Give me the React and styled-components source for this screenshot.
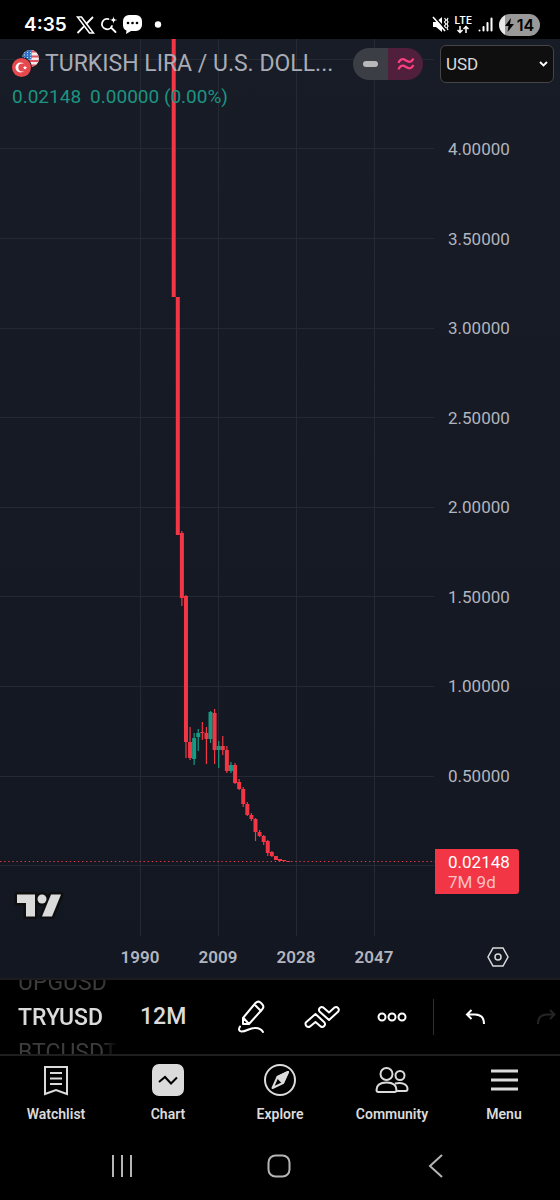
import React from 'react';
import styled, { createGlobalStyle } from 'styled-components';

const GlobalStyle = createGlobalStyle`
    * {
        box-sizing: border-box;
    }
    body {
        margin: 0;
        background: #000;
        font-family: Roboto, "Noto Sans", sans-serif;
    }
    button {
        padding: 0;
        border: none;
        background: none;
        color: inherit;
        font: inherit;
        cursor: pointer;
    }
    svg {
        display: block;
        flex: none;
    }
`

const Page = styled.div`
    display: flex;
    flex-direction: column;
    min-height: 100vh;
    color: #dbdbdb;
`

/* ---------- phone status bar ---------- */

const StatusBar = styled.header`
    display: flex;
    align-items: center;
    height: 39px;
    padding: 10px 20px 0 24px;
    gap: 8px;
    color: #fff;
`

const Clock = styled.span`
    width: 44px;
    font-family: Inter, sans-serif;
    font-size: 19px;
    line-height: 24px;
    font-weight: 600;
    white-space: nowrap;
`

const StatusIcons = styled.div`
    display: flex;
    align-items: center;
    gap: ${props => props.$end ? '6px' : '5px'};
    margin-left: ${props => props.$end ? 'auto' : '0'};
`

const Network = styled.div`
    display: flex;
    flex-direction: column;
    align-items: center;
    font-family: Inter, sans-serif;
    font-size: 10px;
    line-height: 9px;
    font-weight: 600;
`

const Battery = styled.div`
    display: flex;
    align-items: center;
    justify-content: center;
    gap: 3px;
    width: 41px;
    height: 22px;
    border-radius: 11px;
    background: linear-gradient(90deg, #e8e8e8 14%, #999 14%);
    color: #000;
    font-family: Inter, sans-serif;
    font-size: 16px;
    line-height: 20px;
    font-weight: 600;
`

/* ---------- chart ---------- */

const ChartArea = styled.main`
    position: relative;
    flex: 1;
    display: grid;
    grid-template-columns: 1fr 125px;
    grid-template-rows: 1fr 42px;
    background: linear-gradient(#181c27, #131722);
`

const Plot = styled.div`
    position: relative;
    min-height: 600px;
`

const PlotSvg = styled.svg`
    position: absolute;
    inset: 0;
    width: 100%;
    height: 100%;
`

const Logo = styled.svg`
    position: absolute;
    left: 14px;
    bottom: 15px;
`

const Legend = styled.div`
    position: absolute;
    top: 0;
    left: 0;
    right: 0;
    padding: 5px 6px 0 12px;
`

const LegendRow = styled.div`
    display: flex;
    align-items: center;
    height: 39px;
`

const Title = styled.h1`
    flex: 1;
    margin: 0 0 0 6px;
    overflow: hidden;
    color: #a9acb5;
    font-size: 23px;
    line-height: 32px;
    font-weight: 400;
    white-space: nowrap;
`

const Quote = styled.div`
    display: flex;
    gap: 9px;
    color: #1c9481;
    font-size: 19px;
    line-height: 28px;
`

const ModeSwitch = styled.div`
    display: flex;
    width: 70px;
    height: 32px;
    margin-right: 17px;
    border-radius: 16px;
    overflow: hidden;
`

const ModeButton = styled.button`
    flex: 1;
    display: flex;
    align-items: center;
    justify-content: center;
    background: ${props => props.$pink ? '#4f1f3b' : '#3b3e45'};
`

const CurrencyBox = styled.div`
    position: relative;
    width: 114px;
    height: 38px;
`

const Currency = styled.select`
    appearance: none;
    width: 100%;
    height: 100%;
    padding: 0 24px 0 5px;
    border: 1px solid #434548;
    border-radius: 6px;
    background: #0f0f0f;
    color: #dbdbdb;
    font-family: inherit;
    font-size: 17px;
`

const CurrencyArrow = styled.svg`
    position: absolute;
    right: 6px;
    top: 16px;
    pointer-events: none;
`

const PriceAxis = styled.div`
    display: flex;
    flex-direction: column;
    padding: 100px 0 42px;
    color: #b2b5be;
    font-size: 17px;
    line-height: 20px;
`

const Prices = styled.div`
    flex: 1;
    display: flex;
    flex-direction: column;
    justify-content: space-between;
    padding-left: 13px;
    margin-bottom: 63px;
`

const PriceTag = styled.div`
    width: 84px;
    height: 45px;
    padding: 3px 0 0 13px;
    border-radius: 0 3px 3px 0;
    background: #f23645;
    color: #fff;
    span {
        display: block;
    }
    span + span {
        color: #fbc0c5;
    }
`

const TimeAxis = styled.div`
    display: grid;
    grid-template-columns: 101fr repeat(4, 78fr) 22fr;
    align-items: center;
    color: #b2b5be;
    font-size: 17px;
    line-height: 20px;
    font-weight: 600;
    text-align: center;
`

const AxisCorner = styled.div`
    display: flex;
    align-items: center;
    justify-content: center;
    color: #dbdbdb;
`

/* ---------- toolbar ---------- */

const Toolbar = styled.div`
    display: flex;
    align-items: center;
    height: 78px;
    border-top: 2px solid #1c1c1f;
    border-bottom: 2px solid #1f1f1f;
    overflow: hidden;
`

const SymbolWheel = styled.div`
    display: flex;
    flex-direction: column;
    flex: none;
    width: 122px;
    padding-left: 18px;
    font-size: 23px;
    line-height: 35px;
    white-space: nowrap;
    mask-image: linear-gradient(90deg, #000 84%, transparent 96%);
`

const WheelItem = styled.button`
    text-align: left;
    color: ${props => props.$active ? '#dbdbdb' : '#3c3c3c'};
    font-weight: ${props => props.$active ? 500 : 400};
`

const Interval = styled.button`
    margin-left: 18px;
    font-size: 23px;
    line-height: 32px;
    font-weight: 500;
`

const Tools = styled.div`
    flex: 1;
    display: flex;
    align-items: center;
    justify-content: flex-end;
    color: #fff;
`

const ToolGroup = styled.div`
    display: flex;
    align-items: center;
    gap: ${props => props.$wide ? '51px' : '37px'};
`

const Divider = styled.span`
    width: 1px;
    height: 36px;
    margin: 0 31px 0 26px;
    background: #2e2e2e;
`

/* ---------- bottom tabs and phone keys ---------- */

const Tabs = styled.nav`
    display: grid;
    grid-template-columns: repeat(5, 1fr);
    height: 80px;
`

const Tab = styled.a`
    display: flex;
    flex-direction: column;
    align-items: center;
    gap: 8px;
    padding-top: 8px;
    color: #dbdbdb;
    font-size: 14px;
    line-height: 20px;
    font-weight: 600;
    text-decoration: none;
`

const PhoneKeys = styled.div`
    display: flex;
    justify-content: center;
    align-items: center;
    gap: 133px;
    height: 64px;
    padding: 0 2px 4px 0;
    color: #b5b5b5;
`

const priceLabels = ['4.00000', '3.50000', '3.00000', '2.50000', '2.00000', '1.50000', '1.00000', '0.50000'];
const years = ['1990', '2009', '2028', '2047'];

// one bar a year: [high, body top, body bottom, low, up]
const bars = [
    [0, 0, 258, 258],
    [258, 258, 496, 496],
    [492, 494, 559, 567],
    [556, 557, 703, 719],
    [688, 703, 719, 721],
    [694, 699, 720, 726, true],
    [690, 694, 698, 712, true],
    [683, 693, 694, 701],
    [688, 694, 700, 725],
    [672, 673, 700, 704, true],
    [670, 674, 711, 725],
    [702, 707, 711, 729, true],
    [697, 707, 711, 716],
    [707, 711, 732, 734],
    [723, 726, 732, 734, true],
    [724, 726, 744, 745],
    [740, 743, 750, 751],
    [748, 750, 765, 768],
    [763, 765, 776, 777],
    [774, 776, 780, 782],
    [779, 780, 793, 802],
    [791, 793, 797, 798],
    [796, 797, 803, 806],
    [801, 802, 814, 817],
    [812, 813, 817, 818],
    [817, 817, 821, 821],
    [820, 820, 822, 822],
    [821, 821, 822, 822],
    [822, 822, 823, 823],
];

function PriceChart() {
    return (
        <PlotSvg viewBox="0 0 435 897" preserveAspectRatio="none">
            <g stroke="#252934" strokeWidth="1">
                {[140.5, 218.5, 296.5, 374.5].map(x => <path key={x} d={`M${x} 0V897`} />)}
                {[20, 109, 199, 289, 378, 468, 557, 647, 737, 826].map(y => <path key={y} d={`M0 ${y + 0.5}H434`} />)}
            </g>
            {bars.map(([high, top, bottom, low, up], i) => {
                const x = 173.7 + i * 4.09;
                return (
                    <g key={i} fill={up ? '#189981' : '#f23645'}>
                        <rect x={x - 0.6} y={high} width="1.2" height={low - high} />
                        <rect x={x - 2} y={top} width="4" height={bottom - top} />
                    </g>
                );
            })}
            <path d="M0 822.5H435" stroke="#e03a49" strokeWidth="1.2" strokeDasharray="1.4 2.7" />
        </PlotSvg>
    );
}

function PairFlags() {
    return (
        <svg width="27" height="27" viewBox="0 0 27 27">
            <defs>
                <clipPath id="us"><circle cx="18.5" cy="8.5" r="8.5" /></clipPath>
            </defs>
            <g clipPath="url(#us)">
                <rect x="10" width="17" height="17" fill="#f3e9ec" />
                <path d="M10 1.5h17M10 6.5h17M10 11h17M10 15.5h17" stroke="#e0555d" strokeWidth="2.2" />
                <rect x="10" width="9.5" height="9.5" fill="#2f72c4" />
                <path d="M12 2.5h7M12 5h7M12 7.5h7" stroke="#cfe0f5" strokeWidth="1" strokeDasharray="1 2" />
            </g>
            <circle cx="9.5" cy="17.5" r="10.5" fill="#181c27" />
            <circle cx="9.5" cy="17.5" r="9.5" fill="#e5484d" />
            <circle cx="8.5" cy="17.5" r="5" fill="#fff" />
            <circle cx="10.3" cy="17.5" r="4" fill="#e5484d" />
            <path d="M13 15.5l.6 1.4 1.5.1-1.1 1 .3 1.5-1.3-.8-1.3.8.3-1.5-1.1-1 1.5-.1z" fill="#fff" />
        </svg>
    );
}

function App() {
    return (
        <Page>
            <GlobalStyle />
            <StatusBar>
                <Clock>4:35</Clock>
                <StatusIcons>
                    <svg width="19" height="18" viewBox="0 0 19 18" fill="none" stroke="#fff">
                        <path d="M1.5 1h4l12 16h-4z" strokeWidth="1.6" />
                        <path d="M17 1l-6.8 7M8 10.3L1.5 17" strokeWidth="1.8" />
                    </svg>
                    <svg width="18" height="18" viewBox="0 0 18 18" fill="none" stroke="#fff" strokeWidth="1.8" strokeLinecap="round">
                        <path d="M8.500 3a5.200 5.200 0 1 0 3.500 7M11 11.500l4.500 4.500" />
                        <path d="M13.500 0c.3 2.800 1 3.700 4 4c-3 .3-3.700 1.200-4 4c-.3-2.800-1-3.700-4-4c3-.3 3.700-1.200 4-4z" fill="#fff" stroke="none" />
                    </svg>
                    <svg width="19" height="19" viewBox="0 0 19 19">
                        <path d="M6 0h7a6 6 0 0 1 6 6v4a6 6 0 0 1-6 6H8l-5 3 .5-3.5A6 6 0 0 1 0 10V6a6 6 0 0 1 6-6z" fill="#fff" />
                        <circle cx="5" cy="8" r="1.3" /><circle cx="9.5" cy="8" r="1.3" /><circle cx="14" cy="8" r="1.3" />
                    </svg>
                </StatusIcons>
                <svg width="14" height="7" viewBox="0 0 14 7"><circle cx="8" cy="3.5" r="3.2" fill="#fff" /></svg>
                <StatusIcons $end>
                    <svg width="17" height="17" viewBox="0 0 17 17">
                        <path d="M1 6h3l6-5v15l-6-5H1z" fill="#fff" />
                        <path d="M2 0l13 15" stroke="#000" strokeWidth="1.500" />
                        <path d="M1 1l12 14" stroke="#fff" strokeWidth="1.6" />
                        <path d="M12.500 2l1.500 2-1.500 2 1.500 2-1.500 2 1.500 2M16 2l-1 2 1 2-1 2 1 2-1 2 1 2" stroke="#fff" strokeWidth="1.2" fill="none" />
                    </svg>
                    <Network>
                        LTE
                        <svg width="14" height="9" viewBox="0 0 14 9" fill="none" stroke="#fff" strokeWidth="1.5">
                            <path d="M4 1v7M1.5 5L4 7.5 6.5 5M10 8V1M7.5 4L10 1.5 12.5 4" />
                        </svg>
                    </Network>
                    <svg width="15" height="15" viewBox="0 0 15 15" stroke="#fff" strokeWidth="2" strokeLinecap="round">
                        <path d="M1.5 13.5v0M5.5 10v3.5M9.5 6v7.5M13.5 1.5v12" />
                    </svg>
                    <Battery>
                        <svg width="9" height="14" viewBox="0 0 9 14"><path d="M6 0L0 8h3.500L2.500 14 9 6H5z" /></svg>
                        14
                    </Battery>
                </StatusIcons>
            </StatusBar>

            <ChartArea>
                <Plot>
                    <PriceChart />
                    <Logo width="50" height="32" viewBox="0 0 50 32">
                        <g fill="#dbdbdb" stroke="#0f0f0f" strokeWidth="5" strokeLinejoin="round">
                            <path d="M3 5.5h18v22h-9V14H3z" />
                            <path d="M37 5.5h10l-9 22H28z" />
                            <circle cx="28" cy="10" r="4.5" />
                        </g>
                        <g fill="#dbdbdb">
                            <path d="M3 5.5h18v22h-9V14H3z" />
                            <path d="M37 5.5h10l-9 22H28z" />
                            <circle cx="28" cy="10" r="4.5" />
                        </g>
                    </Logo>
                </Plot>
                <PriceAxis>
                    <Prices>
                        {priceLabels.map(price => <span key={price}>{price}</span>)}
                    </Prices>
                    <PriceTag>
                        <span>0.02148</span>
                        <span>7M 9d</span>
                    </PriceTag>
                </PriceAxis>
                <TimeAxis>
                    <span />
                    {years.map(year => <span key={year}>{year}</span>)}
                </TimeAxis>
                <AxisCorner>
                    <button aria-label="Chart settings">
                        <svg width="22" height="20" viewBox="0 0 22 20" fill="none" stroke="currentColor" strokeWidth="1.5">
                            <path d="M6 1h10l5 9-5 9H6l-5-9z" />
                            <circle cx="11" cy="10" r="3" />
                        </svg>
                    </button>
                </AxisCorner>

                <Legend>
                    <LegendRow>
                        <PairFlags />
                        <Title>TURKISH LIRA / U.S. DOLL...</Title>
                        <ModeSwitch>
                            <ModeButton aria-label="Market status">
                                <svg width="15" height="6" viewBox="0 0 15 6"><rect width="15" height="6" rx="3" fill="#b8b8b8" /></svg>
                            </ModeButton>
                            <ModeButton $pink aria-label="Data quality">
                                <svg width="18" height="14" viewBox="0 0 18 14" fill="none" stroke="#f7407f" strokeWidth="2.2">
                                    <path d="M1.5 6C3 1.5 6 1.5 9 3.5s5.5 2 7.5-2M1.5 12.5C3 8 6 8 9 10s5.5 2 7.5-2" />
                                </svg>
                            </ModeButton>
                        </ModeSwitch>
                        <CurrencyBox>
                            <Currency aria-label="Currency" defaultValue="USD">
                                <option>USD</option>
                                <option>TRY</option>
                            </Currency>
                            <CurrencyArrow width="9" height="6" viewBox="0 0 9 6" fill="none" stroke="#fff" strokeWidth="1.8">
                                <path d="M1 1l3.5 3.5L8 1" />
                            </CurrencyArrow>
                        </CurrencyBox>
                    </LegendRow>
                    <Quote>
                        <span>0.02148</span>
                        <span>0.00000 (0.00%)</span>
                    </Quote>
                </Legend>
            </ChartArea>

            <Toolbar>
                <SymbolWheel>
                    <WheelItem>UPGUSD</WheelItem>
                    <WheelItem $active>TRYUSD</WheelItem>
                    <WheelItem>BTCUSDT</WheelItem>
                </SymbolWheel>
                <Interval>12M</Interval>
                <Tools>
                    <ToolGroup>
                        <button aria-label="Draw">
                            <svg width="30" height="34" viewBox="0 0 30 34" fill="none" stroke="currentColor" strokeWidth="2" strokeLinejoin="round" strokeLinecap="round">
                                <path d="M6 24v-6L18.500 3q2.500-2.500 5-.5l1.500 1.500q2.500 2.500.5 5L12 24zM6.500 18l5.500 6M17.500 4.500l6.500 6.500" />
                                <path d="M3 26.500q-2.500 4.500 1.500 5c5 0 8-3.500 13-3.500q6-.5 8.500 4" />
                            </svg>
                        </button>
                        <button aria-label="Indicators">
                            <svg width="36" height="22" viewBox="0 0 36 22" fill="none" stroke="currentColor" strokeWidth="2" strokeLinejoin="round">
                                <path d="M1.800 16.500L11.500 8l9 8.500q1.200 2-.3 3.500t-3.500.5l-5.200-4.500-5.500 4.500q-2 1-3.700-.5-1.300-1.700-.5-3.500z" />
                                <path d="M15.500 5.500q-1.300-2 .3-3.500t3.500-.5L25 6.500l5.500-5q2-1 3.500.5t.3 3.500L25 14z" />
                            </svg>
                        </button>
                        <button aria-label="More">
                            <svg width="30" height="10" viewBox="0 0 30 10" fill="none" stroke="currentColor" strokeWidth="2">
                                <circle cx="5" cy="5" r="3.5" /><circle cx="15" cy="5" r="3.5" /><circle cx="25" cy="5" r="3.5" />
                            </svg>
                        </button>
                    </ToolGroup>
                    <Divider />
                    <ToolGroup $wide>
                        <button aria-label="Undo">
                            <svg width="20" height="16" viewBox="0 0 20 16" fill="none" stroke="currentColor" strokeWidth="2">
                                <path d="M6.5 1L2 5.5 6.5 10M2 5.500h8q9 0 9 9.500" />
                            </svg>
                        </button>
                        <button aria-label="Redo" disabled>
                            <svg width="24" height="16" viewBox="0 0 24 16" fill="none" stroke="#242424" strokeWidth="2">
                                <path d="M14 1l4.500 4.500L14 10M18.500 5.500H11q-9 0-9 9.500" />
                            </svg>
                        </button>
                    </ToolGroup>
                </Tools>
            </Toolbar>

            <Tabs>
                <Tab href="#watchlist">
                    <svg width="32" height="32" viewBox="0 0 32 32" fill="none" stroke="currentColor" strokeWidth="2">
                        <path d="M5 3h22v27l-11-4-11 4zM10 9h12M10 14.500h12M10 20h12" />
                    </svg>
                    Watchlist
                </Tab>
                <Tab href="#chart">
                    <svg width="32" height="32" viewBox="0 0 32 32">
                        <rect width="32" height="32" rx="7" fill="currentColor" />
                        <path d="M7 18l6-5 6 6.500 6-6" fill="none" stroke="#000" strokeWidth="2" />
                    </svg>
                    Chart
                </Tab>
                <Tab href="#explore">
                    <svg width="32" height="32" viewBox="0 0 32 32" fill="none" stroke="currentColor" strokeWidth="2">
                        <circle cx="16" cy="16" r="15" />
                        <path d="M24 8L13.500 13 8.500 24 19 19z" strokeLinejoin="round" />
                        <path d="M24 8L13.500 13l2.500 3 3 3z" fill="currentColor" strokeLinejoin="round" />
                    </svg>
                    Explore
                </Tab>
                <Tab href="#community">
                    <svg width="34" height="32" viewBox="0 0 34 32" fill="none" stroke="currentColor" strokeWidth="2">
                        <circle cx="11.5" cy="10" r="6" />
                        <circle cx="25" cy="11.5" r="4.5" />
                        <path d="M1.500 26c0-5 3.500-7.500 10-7.500s10 2.500 10 7.500q0 2-2 2h-16q-2 0-2-2zM20 19.500c7-1.500 12.500.5 12.500 5.500q0 2-2 2h-9" />
                    </svg>
                    Community
                </Tab>
                <Tab href="#menu">
                    <svg width="32" height="32" viewBox="0 0 32 32" stroke="currentColor" strokeWidth="3">
                        <path d="M3 7h27M3 16h27M3 25h27" />
                    </svg>
                    Menu
                </Tab>
            </Tabs>

            <PhoneKeys>
                <button aria-label="Recent apps">
                    <svg width="24" height="24" viewBox="0 0 24 24" stroke="currentColor" strokeWidth="2"><path d="M3 1v22M12 1v22M21 1v22" /></svg>
                </button>
                <button aria-label="Home">
                    <svg width="24" height="24" viewBox="0 0 24 24" fill="none" stroke="currentColor" strokeWidth="2"><rect x="1.5" y="1.5" width="21" height="21" rx="7" /></svg>
                </button>
                <button aria-label="Back">
                    <svg width="24" height="24" viewBox="0 0 24 24" fill="none" stroke="currentColor" strokeWidth="2"><path d="M18 1L6 12l12 11" /></svg>
                </button>
            </PhoneKeys>
        </Page>
    )
}

export default App
